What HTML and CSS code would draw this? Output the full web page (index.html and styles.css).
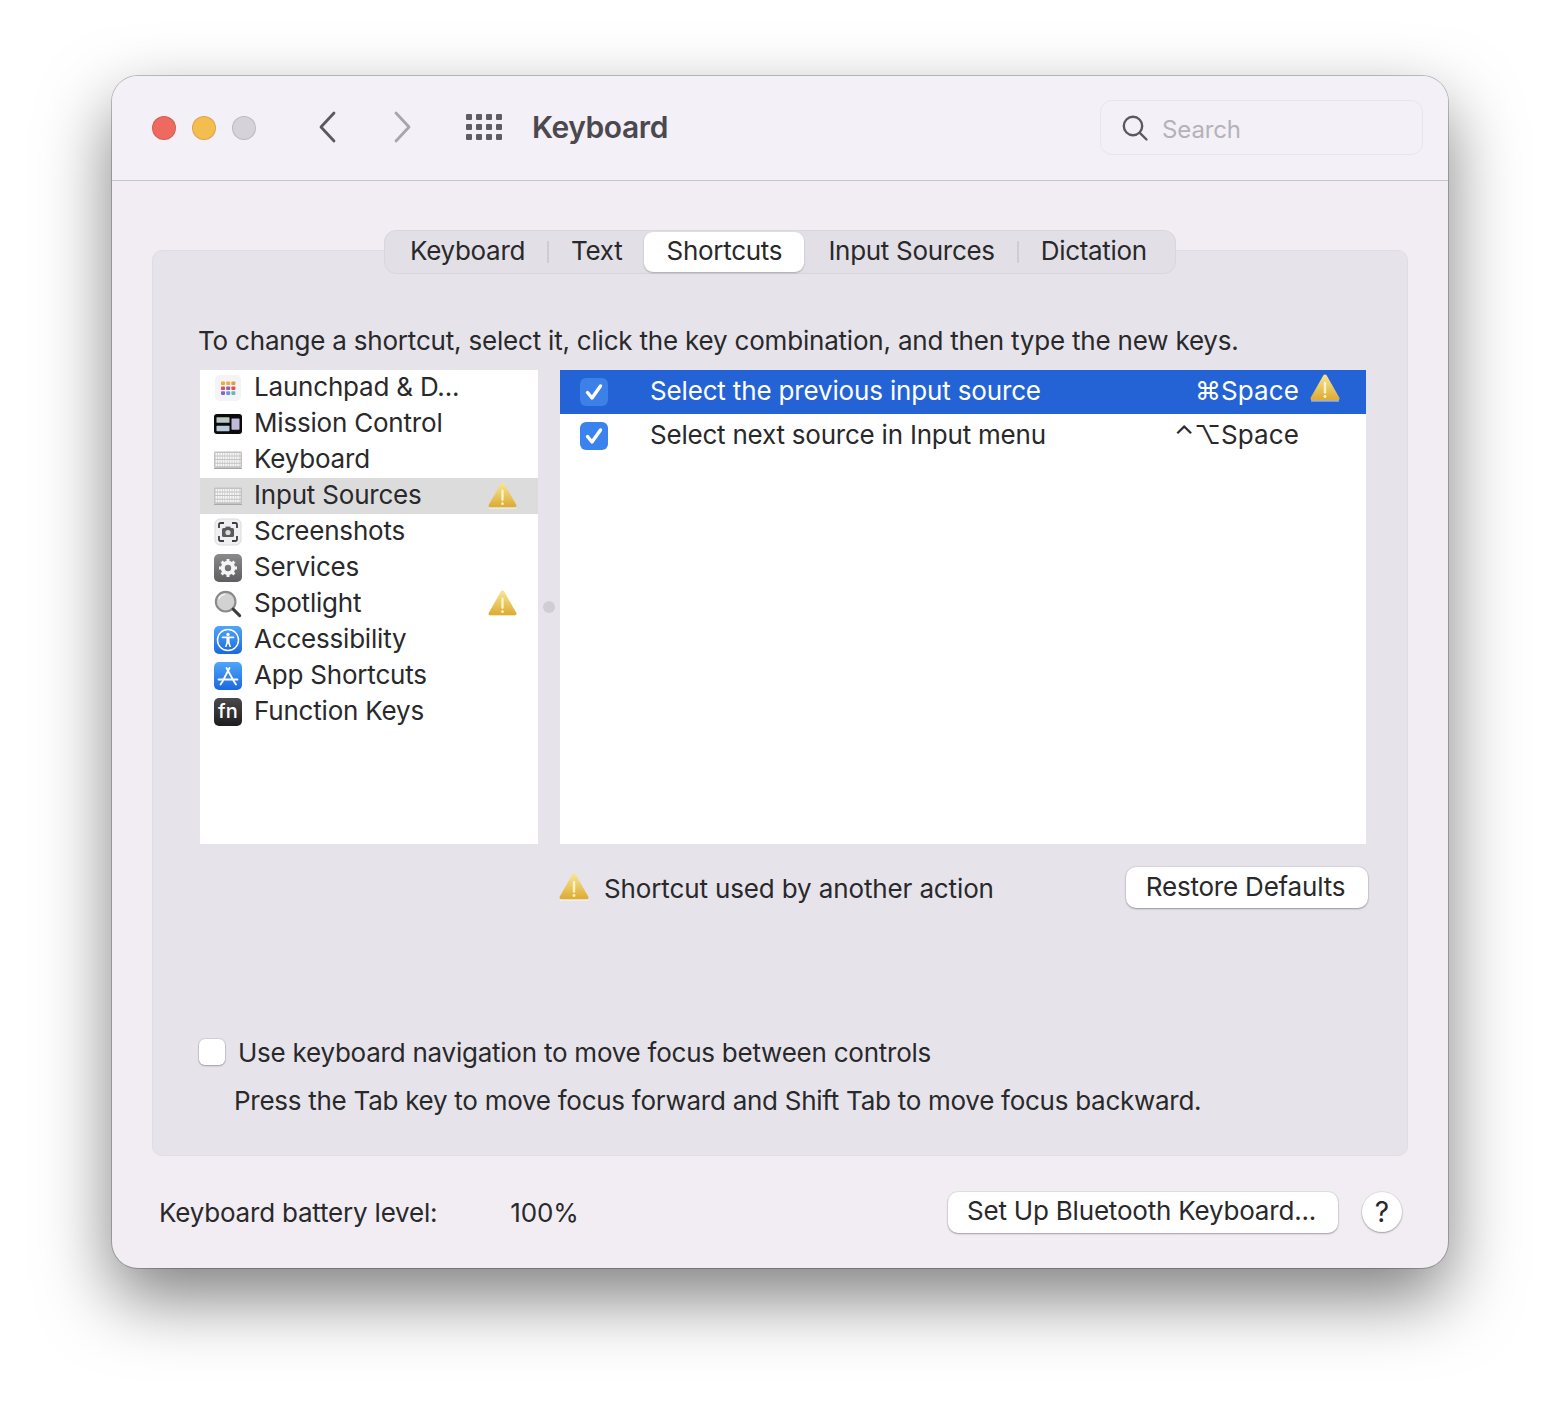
FILE: index.html
```html
<!DOCTYPE html>
<html lang="en">
<head>
<meta charset="utf-8">
<title>Keyboard</title>
<link rel="stylesheet" href="styles.css">
</head>
<body>
<svg class="defs" width="0" height="0" aria-hidden="true">
  <defs>
    <linearGradient id="wg" x1="0" y1="0" x2="0" y2="1"><stop offset="0" stop-color="#f6e28e"/><stop offset="1" stop-color="#deae38"/></linearGradient>
    <linearGradient id="gs" x1="0" y1="0" x2="0" y2="1"><stop offset="0" stop-color="#8a8a8c"/><stop offset="1" stop-color="#5e5e60"/></linearGradient>
    <linearGradient id="bs" x1="0" y1="0" x2="0" y2="1"><stop offset="0" stop-color="#4fa6f8"/><stop offset="1" stop-color="#1c68e0"/></linearGradient>
    <symbol id="warn" viewBox="0 0 30 28">
      <path d="M15 2.5 L27.500 24.500 H2.500 Z" fill="url(#wg)" stroke="url(#wg)" stroke-width="4" stroke-linejoin="round"/>
      <path d="M1 27 H29" stroke="#fff" stroke-opacity=".6" stroke-width="1.200"/>
      <path d="M15 9 V18.500" stroke="#fff3c8" stroke-width="2.400" stroke-linecap="round"/>
      <circle cx="15" cy="22.500" r="1.400" fill="#fff3c8"/>
    </symbol>
    <symbol id="kbd" viewBox="0 0 28 18">
      <rect x="0" y="0.500" width="28" height="16.500" rx="1.500" fill="#c2c2c2"/>
      <path d="M1.500 3.200H26.500M1.500 6.800H26.500M1.500 10.400H26.500M1.500 14H26.500" stroke="#f6f6f6" stroke-width="2.600" stroke-dasharray="1.800 .6"/>
      <path d="M0 17.500H28" stroke="#a8a8a8"/>
    </symbol>
  </defs>
</svg>

<main class="window">
  <header class="titlebar">
    <div class="lights">
      <span class="light red"></span>
      <span class="light yellow"></span>
      <span class="light gray"></span>
    </div>
    <svg class="nav back" width="18" height="32" viewBox="0 0 18 32"><path d="M16 2 L3 16 L16 30"/></svg>
    <svg class="nav fwd" width="18" height="32" viewBox="0 0 18 32"><path d="M2 2 L15 16 L2 30"/></svg>
    <div class="apps"><i></i><i></i><i></i><i></i><i></i><i></i><i></i><i></i><i></i><i></i><i></i><i></i></div>
    <h1 class="title">Keyboard</h1>
    <div class="search">
      <svg width="28" height="28" viewBox="0 0 28 28"><circle cx="12" cy="12" r="9.200"/><path d="M18.800 18.800 L25.500 25.500"/></svg>
      <span class="search-text">Search</span>
    </div>
  </header>

  <div class="content">
    <section class="panel">
      <nav class="tabs">
        <span class="tab first">Keyboard</span><i class="sep"></i>
        <span class="tab">Text</span>
        <span class="tab active">Shortcuts</span>
        <span class="tab after-active">Input Sources</span><i class="sep"></i>
        <span class="tab last">Dictation</span>
      </nav>

      <p class="instruction">To change a shortcut, select it, click the key combination, and then type the new keys.</p>

      <div class="lists">
        <ul class="cats">
          <li class="cat">
            <svg class="ic" width="28" height="28" viewBox="0 0 28 28"><rect x="1" y="1" width="26" height="26" rx="5" fill="#f4f3f5"/>
              <g><rect x="7" y="7.500" width="4" height="3.600" rx=".8" fill="#e8ae3c"/><rect x="12.200" y="7.500" width="4" height="3.600" rx=".8" fill="#eeb23e"/><rect x="17.400" y="7.500" width="4" height="3.600" rx=".8" fill="#e59a48"/>
              <rect x="7" y="12.400" width="4" height="3.600" rx=".8" fill="#d8505a"/><rect x="12.200" y="12.400" width="4" height="3.600" rx=".8" fill="#9a5bb0"/><rect x="17.400" y="12.400" width="4" height="3.600" rx=".8" fill="#e0525a"/>
              <rect x="7" y="17.300" width="4" height="3.600" rx=".8" fill="#8d62c4"/><rect x="12.200" y="17.300" width="4" height="3.600" rx=".8" fill="#5f9fd8"/><rect x="17.400" y="17.300" width="4" height="3.600" rx=".8" fill="#62bcb0"/></g></svg>
            <span class="cat-name">Launchpad &amp; D...</span>
          </li>
          <li class="cat">
            <svg class="ic" width="28" height="28" viewBox="0 0 28 28"><rect x="0" y="4" width="28" height="20" rx="3" fill="#0b0b0d"/>
              <rect x="2.500" y="7.200" width="13" height="5.600" rx=".6" fill="#bcc8c2"/><rect x="2.500" y="15.800" width="13" height="5.400" rx=".6" fill="#b9cad8"/><rect x="17.500" y="8.500" width="8" height="11.200" rx=".6" fill="#c0b9da"/></svg>
            <span class="cat-name">Mission Control</span>
          </li>
          <li class="cat">
            <svg class="ic" width="28" height="18" viewBox="0 0 28 18"><use href="#kbd"/></svg>
            <span class="cat-name">Keyboard</span>
          </li>
          <li class="cat selected">
            <svg class="ic" width="28" height="18" viewBox="0 0 28 18"><use href="#kbd"/></svg>
            <span class="cat-name">Input Sources</span>
            <svg class="cat-warn" width="29" height="27" viewBox="0 0 30 28"><use href="#warn"/></svg>
          </li>
          <li class="cat">
            <svg class="ic" width="28" height="28" viewBox="0 0 28 28"><rect x="1" y="1" width="26" height="26" rx="5" fill="#efeef0" stroke="#dcdbdd"/>
              <path d="M5 10V6.500A1.500 1.500 0 0 1 6.500 5H10M18 5H21.500A1.500 1.500 0 0 1 23 6.500V10M23 18V21.500A1.500 1.500 0 0 1 21.500 23H18M10 23H6.500A1.500 1.500 0 0 1 5 21.500V18" fill="none" stroke="#3d3d3f" stroke-width="1.800"/>
              <rect x="8" y="10" width="12" height="9" rx="1.500" fill="#5a5a5c"/><rect x="11.500" y="8.600" width="5" height="2" fill="#5a5a5c"/><circle cx="14" cy="14.500" r="2.600" fill="#dcdcde"/></svg>
            <span class="cat-name">Screenshots</span>
          </li>
          <li class="cat">
            <svg class="ic" width="28" height="28" viewBox="0 0 28 28"><rect x="0" y="0" width="28" height="28" rx="5" fill="url(#gs)"/>
              <circle cx="14" cy="14" r="5.200" fill="none" stroke="#f4f4f4" stroke-width="4"/>
              <path d="M14 5V8M14 20V23M5 14H8M20 14H23M7.600 7.600L9.800 9.800M18.200 18.200L20.400 20.400M20.400 7.600L18.200 9.800M9.800 18.200L7.600 20.400" stroke="#f4f4f4" stroke-width="3"/></svg>
            <span class="cat-name">Services</span>
          </li>
          <li class="cat">
            <svg class="ic" width="30" height="30" viewBox="0 0 30 30"><circle cx="12.500" cy="12.500" r="10.500" fill="#d2d2d2" stroke="#8a8a8a" stroke-width="2.200"/><path d="M5 10A8 8 0 0 1 12 4.500" fill="none" stroke="#f2f2f2" stroke-width="1.600"/><path d="M20.500 20.500L27.500 27.500" stroke="#3c3c3e" stroke-width="3.200" stroke-linecap="round"/></svg>
            <span class="cat-name">Spotlight</span>
            <svg class="cat-warn" width="29" height="27" viewBox="0 0 30 28"><use href="#warn"/></svg>
          </li>
          <li class="cat">
            <svg class="ic" width="28" height="28" viewBox="0 0 28 28"><rect width="28" height="28" rx="5" fill="url(#bs)"/><circle cx="14" cy="14" r="10.500" fill="none" stroke="#fff" stroke-width="1.500"/><circle cx="14" cy="8.400" r="1.700" fill="#fff"/><path d="M8.500 11.400H19.500" fill="none" stroke="#fff" stroke-width="1.700" stroke-linecap="round"/><path d="M12.400 11.400H15.600V16L17 21H15.600L14 17L12.400 21H11L12.400 16Z" fill="#fff"/></svg>
            <span class="cat-name">Accessibility</span>
          </li>
          <li class="cat">
            <svg class="ic" width="28" height="28" viewBox="0 0 28 28"><rect width="28" height="28" rx="5" fill="url(#bs)"/><path d="M15.500 6L8.500 19.500M6.500 22.500L8.500 19.500M12.500 6L20 19.500L22 22.500M4.500 17.500H23.500" fill="none" stroke="#fff" stroke-width="1.800" stroke-linecap="round"/></svg>
            <span class="cat-name">App Shortcuts</span>
          </li>
          <li class="cat">
            <span class="fn-ic">fn</span>
            <span class="cat-name">Function Keys</span>
          </li>
        </ul>

        <div class="divider"><span class="dot"></span></div>

        <div class="shortcuts">
          <div class="row selected-row">
            <svg class="check on-sel" width="28" height="28" viewBox="0 0 28 28"><rect width="28" height="28" rx="6"/><path d="M7.500 14.500L12 20L20.500 8"/></svg>
            <span class="row-label">Select the previous input source</span>
            <span class="keys">⌘Space</span>
            <svg class="row-warn" width="30" height="28" viewBox="0 0 30 28"><use href="#warn"/></svg>
          </div>
          <div class="row">
            <svg class="check" width="28" height="28" viewBox="0 0 28 28"><rect width="28" height="28" rx="6"/><path d="M7.500 14.500L12 20L20.500 8"/></svg>
            <span class="row-label">Select next source in Input menu</span>
            <span class="keys">⌃⌥Space</span>
          </div>
        </div>
      </div>

      <div class="status">
        <svg class="status-warn" width="30" height="28" viewBox="0 0 30 28"><use href="#warn"/></svg>
        <span class="status-text">Shortcut used by another action</span>
        <button class="btn restore">Restore Defaults</button>
      </div>

      <label class="nav-check"><span class="box"></span><span class="nav-text">Use keyboard navigation to move focus between controls</span></label>
      <p class="hint">Press the Tab key to move focus forward and Shift Tab to move focus backward.</p>
    </section>

    <footer class="footer">
      <span class="battery-label">Keyboard battery level:</span>
      <span class="battery-value">100%</span>
      <button class="btn bluetooth">Set Up Bluetooth Keyboard...</button>
      <button class="help">?</button>
    </footer>
  </div>
</main>
</body>
</html>
```

FILE: styles.css
```css
* { box-sizing: border-box; }
html, body { margin: 0; padding: 0; }
body {
  width: 1560px;
  height: 1416px;
  padding: 76px 112px 0;
  background: #fff;
  overflow: hidden;
  font-family: Inter, "Liberation Sans", sans-serif;
  font-size: 26px;
  letter-spacing: -.2px;
  color: #29292b;
}
.defs { position: absolute; }
.window {
  width: 1336px;
  height: 1192px;
  display: flex;
  flex-direction: column;
  border-radius: 26px;
  background: #f1edf3;
  box-shadow: 0 0 0 1px rgba(0,0,0,.22), 0 30px 70px rgba(0,0,0,.5);
}

/* title bar */
.titlebar {
  height: 105px;
  flex: none;
  display: flex;
  align-items: center;
  padding: 0 25px 1px 40px;
  border-bottom: 1px solid #c8c6cb;
  border-radius: 26px 26px 0 0;
  background: #f4f0f7;
}
.lights { display: flex; gap: 16px; }
.light { width: 24px; height: 24px; border-radius: 50%; border: 1px solid rgba(0,0,0,.12); }
.red { background: #ee6a5f; }
.yellow { background: #f5bd4f; }
.gray { background: #d5d3d9; }
.nav { fill: none; stroke-width: 2.800; stroke-linecap: round; stroke-linejoin: round; margin-bottom: 2px; }
.back { margin-left: 62px; stroke: #5b585f; }
.fwd { margin-left: 58px; stroke: #a8a5ab; }
.apps {
  margin-left: 54px;
  width: 36px;
  display: grid;
  grid-template-columns: repeat(4, 6px);
  grid-auto-rows: 6px;
  gap: 4px;
  margin-bottom: 2px;
}
.apps i { background: #5f5c63; border-radius: 1px; }
.title { margin: 0 0 2px 30px; font-size: 30px; line-height: 36px; font-weight: 600; color: #4b484f; letter-spacing: -.42px; }
.search {
  margin-left: auto;
  width: 323px;
  height: 55px;
  display: flex;
  align-items: center;
  gap: 13px;
  padding-left: 20px;
  border: 1px solid #e8e4ec;
  border-radius: 12px;
  color: #b5b2b8;
  font-size: 24px;
  letter-spacing: -.12px;
}
.search svg { fill: none; stroke: #5b585f; stroke-width: 2.400; stroke-linecap: round; }
.search-text { padding-top: 4px; }

/* panel */
.content { flex: 1; display: flex; flex-direction: column; padding: 69px 40px 0; }
.panel {
  width: 1256px;
  height: 906px;
  flex: none;
  display: flex;
  flex-direction: column;
  padding: 0 40px 0 46px;
  background: #e6e4ea;
  border: 1px solid #e0dee4;
  border-radius: 10px;
}
.tabs {
  margin-top: -21px;
  align-self: center;
  transform: translateX(-3px);
  width: 792px;
  height: 44px;
  flex: none;
  display: flex;
  align-items: center;
  padding: 0 2px;
  background: #e2e0e6;
  border: 1px solid #d9d7dc;
  border-radius: 12px;
  letter-spacing: -.3px;
}
.tab { height: 40px; line-height: 38px; padding: 0 22px; flex: none; }
.tab.first { padding-left: 23px; }
.tab.after-active { padding-left: 24px; }
.sep { width: 2px; height: 22px; background: #cfcdd3; flex: none; }
.tab.active {
  width: 160px;
  padding: 0;
  text-align: center;
  background: #fff;
  border-radius: 9px;
  box-shadow: 0 1px 2px rgba(0,0,0,.25);
}
.instruction { margin: 47px 0 0 -1px; height: 40px; line-height: 40px; flex: none; }

/* lists */
.lists { display: flex; height: 474px; margin-top: 9px; flex: none; }
.cats { width: 338px; margin: 0 0 0 1px; padding: 0; list-style: none; background: #fff; }
.cat { height: 36px; display: flex; align-items: center; padding: 0 20px 0 14px; position: relative; line-height: 34px; }
.cat .ic { width: 28px; flex: none; overflow: visible; }
.cat-name { margin-left: 12px; padding-bottom: 2px; }
.cat.selected { background: #dcdcdd; }
.cat-warn { margin-left: auto; margin-right: 1px; margin-bottom: 2px; }
.fn-ic {
  width: 28px;
  height: 28px;
  flex: none;
  border-radius: 5px;
  background: linear-gradient(#4a4a4c, #1e1e20);
  color: #fff;
  font-size: 20px;
  font-weight: 500;
  letter-spacing: .3px;
  line-height: 27px;
  text-align: center;
}
.divider { width: 22px; display: flex; align-items: center; justify-content: center; padding-bottom: 1px; }
.dot { width: 12px; height: 12px; border-radius: 50%; background: #d0ced3; }
.shortcuts { width: 806px; background: #fff; }
.row { height: 44px; display: flex; align-items: center; padding: 0 26px 0 20px; position: relative; }
.row-label { margin-left: 42px; padding-bottom: 4px; letter-spacing: -.16px; }
.row + .row .row-label { letter-spacing: -.22px; }
.keys { position: absolute; right: 67px; top: 0; line-height: 42px; letter-spacing: .1px; }
.selected-row { background: #2463d6; color: #fff; }
.row-warn { position: absolute; right: 26px; top: 4px; }
.check rect { fill: #3a83ee; }
.check path { fill: none; stroke: #fff; stroke-width: 3.400; stroke-linecap: round; stroke-linejoin: round; }
.on-sel rect { fill: #3c80e8; }

/* status */
.status { display: flex; align-items: center; height: 42px; margin: 22px 0 0 361px; flex: none; }
.status-warn { flex: none; margin-left: -1px; }
.status-text { margin-left: 15px; position: relative; top: 1px; letter-spacing: -.13px; }
.btn {
  font: inherit;
  color: inherit;
  background: #fff;
  border: 0;
  border-radius: 10px;
  box-shadow: 0 0 0 1px rgba(0,0,0,.05), 0 1px 2px rgba(0,0,0,.3);
  padding: 0 0 3px;
}
.restore { width: 242px; height: 41px; margin-left: auto; margin-right: -1px; padding: 0 3px 1px 0; letter-spacing: -.2px; }

/* nav check */
.nav-check { display: flex; align-items: center; gap: 13px; margin-top: 130px; height: 28px; flex: none; }
.nav-text { letter-spacing: -.24px; }
.box { width: 26px; height: 26px; border-radius: 6px; background: #fff; box-shadow: 0 0 0 1px rgba(0,0,0,.08), 0 1px 2px rgba(0,0,0,.25); flex: none; }
.hint { margin: 15px 0 0 35px; line-height: 40px; letter-spacing: -.27px; }

/* footer */
.footer { flex: 1; display: flex; align-items: center; padding: 0 6px 0 7px; }
.battery-value { margin-left: 73px; }
.bluetooth { width: 390px; height: 41px; margin-left: auto; padding-right: 3px; letter-spacing: -.2px; }
.help {
  width: 40px;
  height: 40px;
  margin-left: 24px;
  border: 0;
  border-radius: 50%;
  background: #fff;
  font: inherit;
  font-size: 28px;
  color: inherit;
  padding: 0;
  box-shadow: 0 0 0 1px rgba(0,0,0,.05), 0 1px 2px rgba(0,0,0,.3);
}
```
